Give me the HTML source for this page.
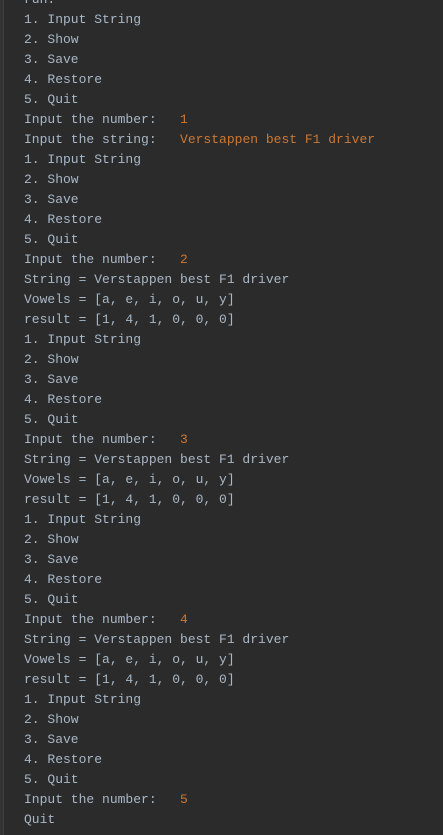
<!DOCTYPE html>
<html><head><style>
html,body{margin:0;padding:0;background:#2b2b2b;width:443px;height:835px;overflow:hidden}
.bl{position:absolute;left:0;top:0;width:3px;height:835px;background:#313335;border-right:1px solid #3c3f41}
pre{position:absolute;left:24px;top:-10px;margin:0;font-family:"Liberation Mono",monospace;font-size:13px;line-height:20px;color:#a9b7c6}
.o{color:#cc7832}
</style></head><body><div class="bl"></div>
<pre>run:
1. Input String
2. Show
3. Save
4. Restore
5. Quit
Input the number:   <span class="o">1</span>
Input the string:   <span class="o">Verstappen best F1 driver</span>
1. Input String
2. Show
3. Save
4. Restore
5. Quit
Input the number:   <span class="o">2</span>
String = Verstappen best F1 driver
Vowels = [a, e, i, o, u, y]
result = [1, 4, 1, 0, 0, 0]
1. Input String
2. Show
3. Save
4. Restore
5. Quit
Input the number:   <span class="o">3</span>
String = Verstappen best F1 driver
Vowels = [a, e, i, o, u, y]
result = [1, 4, 1, 0, 0, 0]
1. Input String
2. Show
3. Save
4. Restore
5. Quit
Input the number:   <span class="o">4</span>
String = Verstappen best F1 driver
Vowels = [a, e, i, o, u, y]
result = [1, 4, 1, 0, 0, 0]
1. Input String
2. Show
3. Save
4. Restore
5. Quit
Input the number:   <span class="o">5</span>
Quit
</pre></body></html>
